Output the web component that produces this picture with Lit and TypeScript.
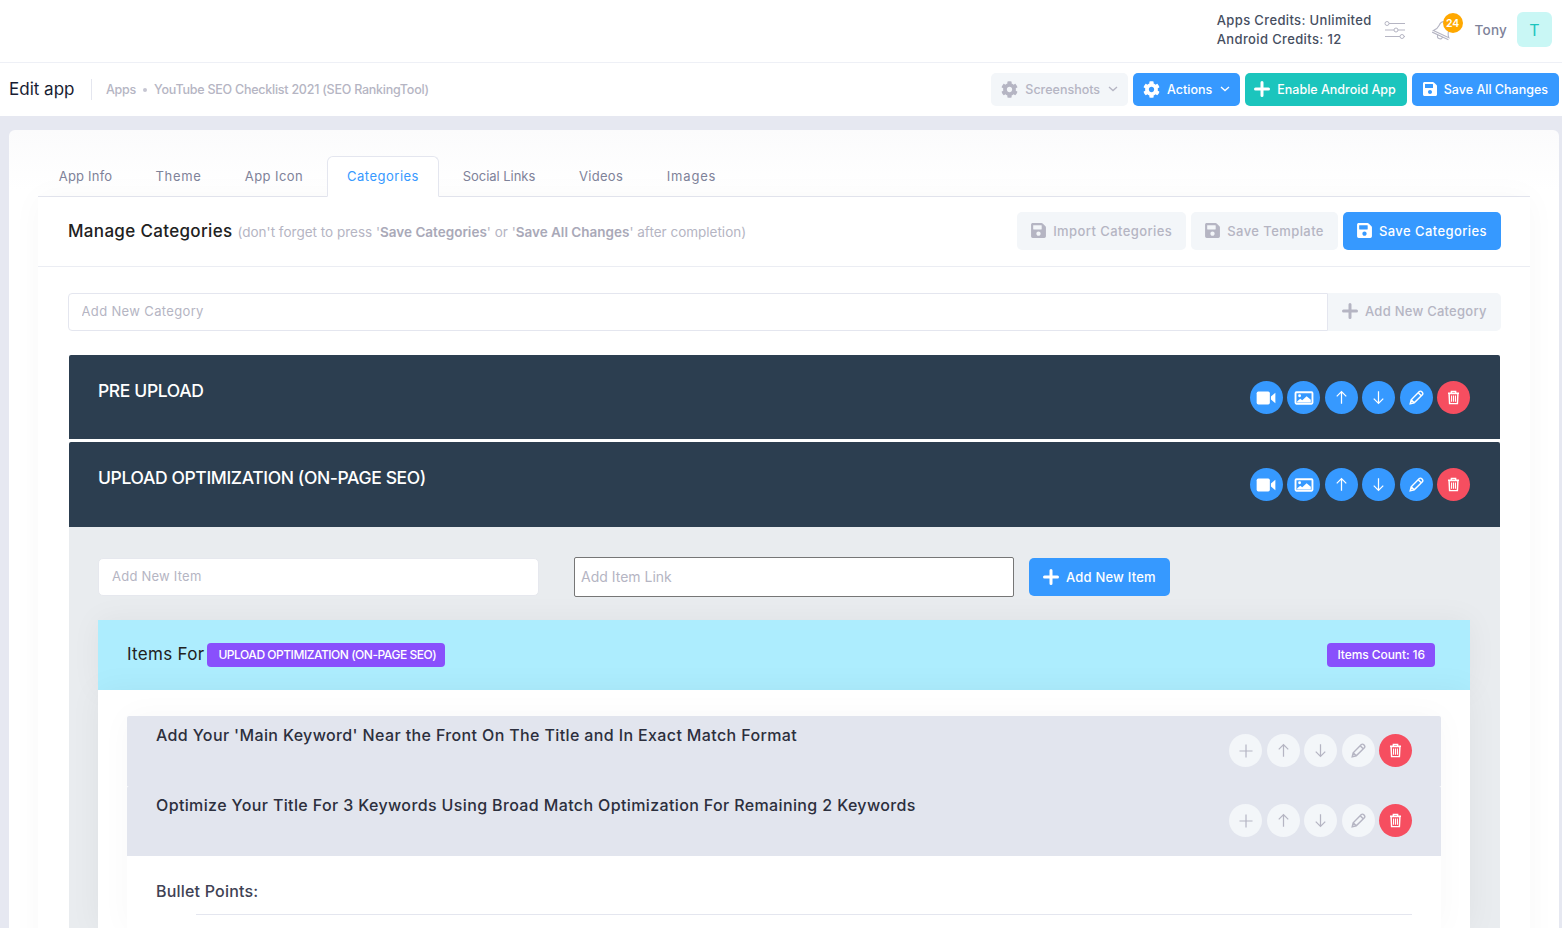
import { LitElement, html, css, svg } from "lit";
import { customElement } from "lit/decorators.js";

const SAVE = "M433.941 129.941l-83.882-83.882A48 48 0 0 0 316.118 32H48C21.49 32 0 53.49 0 80v352c0 26.51 21.49 48 48 48h352c26.51 0 48-21.49 48-48V163.882a48 48 0 0 0-14.059-33.941zM224 416c-35.346 0-64-28.654-64-64 0-35.346 28.654-64 64-64s64 28.654 64 64c0 35.346-28.654 64-64 64zm96-304.52V212c0 6.627-5.373 12-12 12H76c-6.627 0-12-5.373-12-12V108c0-6.627 5.373-12 12-12h228.52c3.183 0 6.235 1.264 8.485 3.515l3.48 3.48A11.996 11.996 0 0 1 320 111.48z";
const COG = "M487.4 315.7l-42.6-24.6c4.3-23.2 4.3-47 0-70.2l42.6-24.6c4.9-2.8 7.1-8.6 5.5-14-11.1-35.6-30-67.8-54.7-94.6-3.8-4.1-10-5.1-14.8-2.3L380.8 110c-17.9-15.4-38.5-27.3-60.8-35.1V25.8c0-5.6-3.9-10.5-9.4-11.7-36.7-8.2-74.3-7.8-109.2 0-5.5 1.2-9.4 6.1-9.4 11.7V75c-22.2 7.9-42.8 19.8-60.8 35.1L88.7 85.5c-4.9-2.8-11-1.9-14.8 2.3-24.7 26.7-43.6 58.9-54.7 94.6-1.7 5.4.6 11.2 5.5 14L67.3 221c-4.3 23.2-4.3 47 0 70.2l-42.6 24.6c-4.9 2.8-7.1 8.6-5.5 14 11.1 35.6 30 67.8 54.7 94.6 3.8 4.1 10 5.1 14.8 2.3l42.6-24.6c17.9 15.4 38.5 27.3 60.8 35.1v49.2c0 5.6 3.9 10.5 9.4 11.7 36.7 8.2 74.3 7.8 109.2 0 5.5-1.2 9.4-6.1 9.4-11.7v-49.2c22.2-7.9 42.8-19.8 60.8-35.1l42.6 24.6c4.9 2.8 11 1.9 14.8-2.3 24.7-26.7 43.6-58.9 54.7-94.6 1.5-5.5-.7-11.3-5.6-14.1zM256 336c-44.1 0-80-35.9-80-80s35.9-80 80-80 80 35.9 80 80-35.9 80-80 80z";

const saveIcon = () => html`<svg class="ico save" viewBox="0 0 448 512"><path d=${SAVE} fill="currentColor"/></svg>`;
const cogIcon = () => html`<svg class="ico cog" viewBox="0 0 512 512"><path d=${COG} fill="currentColor"/></svg>`;
const plusIcon = () => html`<svg class="ico plus" viewBox="0 0 16 16"><path d="M8 1.500v13M1.500 8h13" stroke="currentColor" stroke-width="3" stroke-linecap="round" fill="none"/></svg>`;
const chevron = () => html`<svg class="chev" viewBox="0 0 10 6"><path d="M1 1l4 3.600L9 1" stroke="currentColor" stroke-width="1.300" fill="none"/></svg>`;

const glyphs: Record<string, unknown> = {
  video: svg`<rect x="1.500" y="4.200" width="12" height="11.600" rx="1.500" fill="currentColor"/><path d="M14.500 8.600L18.500 5.200v9.600L14.500 11.400z" fill="currentColor"/>`,
  image: svg`<rect x="2.300" y="4.800" width="15.400" height="10.400" rx="0.800" fill="none" stroke="currentColor" stroke-width="1.700"/><circle cx="6" cy="8" r="1.300" fill="currentColor"/><path d="M3.800 14.200v-1.300l2.800-2.200 1.800 1.300 4-3.600 3.800 3.300v2.500z" fill="currentColor"/>`,
  up: svg`<path d="M10 16.500V4M5 8.800L10 3.800l5 5" fill="none" stroke="currentColor" stroke-width="1.300"/>`,
  down: svg`<path d="M10 3.500V16M5 11.200l5 5 5-5" fill="none" stroke="currentColor" stroke-width="1.300"/>`,
  plus: svg`<path d="M10 3.500v13M3.500 10h13" fill="none" stroke="currentColor" stroke-width="1.200"/>`,
  pencil: svg`<path d="M3.400 16.600l1-4.200 8.600-8.600a1.600 1.600 0 0 1 2.300 0l.9.9a1.600 1.600 0 0 1 0 2.300l-8.600 8.600zM11.800 5l3.200 3.200M4.400 12.400l3.200 3.200" fill="none" stroke="currentColor" stroke-width="1.500"/>`,
  trash: svg`<path d="M3.500 5h13M7.500 5V2.800h5V5M4.800 5.400l.6 11.800h9.200l.6-11.800z" fill="none" stroke="currentColor" stroke-width="1.700"/><path d="M7.700 7.500v7.500M10 7.500v7.500M12.300 7.500v7.500" stroke="currentColor" stroke-width="1.300"/>`,
};

const round = (name: string, kind: string) => html`<span class="rnd ${kind}"><svg viewBox="0 0 20 20" class="g-${name}">${glyphs[name]}</svg></span>`;

@customElement("app-root")
export class AppRoot extends LitElement {
  static styles = css`
    :host { display: block; height: 928px; overflow: hidden; background: #e6e8f1; font-family: Inter, "Open Sans", sans-serif; color: #3f4254; }
    * { box-sizing: border-box; }
    .top { height: 63px; background: #fff; border-bottom: 1px solid #eef0f6; display: flex; align-items: center; justify-content: flex-end; padding-right: 10px; }
    .credits { font-size: 13px; font-weight: 500; line-height: 19px; color: #464e5f; letter-spacing: 0.36px; margin-right: 12px; margin-top: -3px; white-space: nowrap; }
    .sliders { width: 22px; height: 22px; color: #b5b5c3; margin-right: 26px; margin-top: -2px; }
    .bell-wrap { position: relative; width: 22px; height: 26px; margin-right: 21px; margin-top: 4px; }
    .bell { width: 22px; height: 22px; color: #b5b5c3; position: absolute; left: 0; top: -1px; }
    .badge { position: absolute; left: 11px; top: -7px; width: 20px; height: 20px; border-radius: 50%; background: #ffa800; color: #fff; font-size: 10.5px; font-weight: 600; display: flex; align-items: center; justify-content: center; }
    .tony { font-size: 13.500px; font-weight: 500; color: #7e8299; margin-right: 10px; margin-top: -3px; letter-spacing: 0.2px; }
    .avatar { width: 35px; height: 35px; border-radius: 6px; background: #c9f7f5; color: #1bc5bd; font-size: 16px; display: flex; align-items: center; justify-content: center; margin-top: -3px; }

    .sub { height: 53px; background: #fff; display: flex; align-items: center; padding: 0 3px 0 9px; }
    .sub h1 { margin: 0; font-size: 17px; font-weight: 400; color: #181c32; width: 83px; border-right: 1px solid #e4e6ef; line-height: 21px; }
    .crumbs { margin-left: 14px; font-size: 12.500px; font-weight: 500; color: #b5b5c3; display: flex; align-items: center; letter-spacing: -0.24px; flex: 1; }
    .crumbs i { width: 4px; height: 4px; border-radius: 50%; background: #c6c6d2; margin: 0 7px; }
    .btns { display: flex; gap: 5px; }
    .btn { display: inline-flex; align-items: center; border-radius: 5px; font-size: 12.500px; font-weight: 500; color: #fff; white-space: nowrap; padding-bottom: 1px; }
    .sub .btn { height: 33px; padding: 0 11px 1px; }
    .sub .btn.dd { padding: 0 10px 1px 10px; }
    .sub .btn.en { padding-left: 9px; }
    .blue { background: #3699ff; }
    .teal { background: #1bc5bd; }
    .light { background: #f3f6f9; color: #b5b5c3; }
    .ico { flex: none; margin-right: 7px; }
    .ico.save { width: 14px; height: 16px; }
    .ico.cog { width: 17px; height: 17px; }
    .ico.plus { width: 16px; height: 16px; }
    .chev { width: 10px; height: 6px; margin-left: 8px; }

    .wrap { padding: 14px 3px 0 9px; }
    .card { border-radius: 6px 6px 0 0; padding: 26px 29px 0; height: 798px; background: linear-gradient(#fbfbfc, #fff 60px); }
    .tabs { display: flex; gap: 4px; height: 41px; border-bottom: 1px solid #e4e6ef; padding-left: 1px; }
    .tab { height: 41px; font-size: 13px; color: #7e8299; display: flex; align-items: center; justify-content: center; padding-bottom: 1px; border-radius: 6px 6px 0 0; white-space: nowrap; }
    .tab.on { color: #3699ff; background: #fff; border: 1px solid #e4e6ef; border-bottom: 1px solid #fff; }
    .content { background: #fff; box-shadow: 0 0 30px rgba(0, 0, 0, 0.03); height: 760px; }
    .manage { height: 70px; border-bottom: 1px solid #ebedf3; display: flex; align-items: center; padding: 0 29px 2px 30px; justify-content: space-between; }
    .manage h2 { margin: 0; font-size: 17px; font-weight: 500; color: #212121; letter-spacing: 0.33px; display: flex; align-items: baseline; white-space: nowrap; }
    .manage small { font-size: 13.500px; font-weight: 400; color: #b5b5c3; margin-left: 5px; letter-spacing: 0; }
    .manage small b { font-weight: 600; color: #a9a9b8; }
    .manage .btn { height: 38px; padding: 0 14px; font-size: 13px; letter-spacing: 0.42px; }
    .manage .ico.save { width: 15px; height: 17px; }
    .addcat { display: flex; margin: 26px 29px 24px 30px; height: 38px; }
    input { font: inherit; background: #fff; outline: none; }
    input::placeholder { color: #b5b5c3; opacity: 1; }
    .addcat input { flex: 1; min-width: 0; height: 38px; border: 1px solid #e4e6ef; border-radius: 4px 0 0 4px; padding: 0 12.500px 2px; font-size: 13px; letter-spacing: 0.35px; }
    .addcat .btn { height: 38px; width: 173px; padding: 0 14px 2px; border-radius: 0 5px 5px 0; color: #b5b5c3; font-size: 13px; letter-spacing: 0.25px; }
    .cats { margin: 0 30px 0 31px; }
    .cat { height: 84px; background: #2c3e50; border-radius: 2px 2px 0 0; display: flex; justify-content: space-between; padding: 25px 30px 0 29px; margin-bottom: 3px; }
    .cat + .cat { height: 85px; margin-bottom: 0; }
    .cat h3 { margin: 0; font-size: 17.500px; font-weight: 500; color: #fff; line-height: 22px; letter-spacing: -0.37px; }
    .acts { display: flex; gap: 4.500px; }
    .cat .acts { margin-top: 1px; }
    .rnd { width: 33px; height: 33px; border-radius: 50%; display: flex; align-items: center; justify-content: center; }
    .rnd svg { width: 20px; height: 20px; }
    .rnd svg.g-video, .rnd svg.g-image { width: 22px; height: 22px; }
    .rnd svg.g-up, .rnd svg.g-down, .rnd svg.g-pencil { width: 19px; height: 19px; }
    .rnd svg.g-trash { width: 17px; height: 17px; }
    .rnd.b { background: #3699ff; color: #fff; }
    .rnd.r { background: #f64e60; color: #fff; }
    .rnd.l { background: #f3f6f9; color: #b5b5c3; }
    .cat-body { background: #e9ecef; padding: 30px 30px 0 29px; height: 420px; }
    .form { display: flex; align-items: center; height: 40px; }
    .form .item { width: 441px; height: 38px; border: 1px solid #e6e8ee; border-radius: 5px; padding: 0 13px 2px; font-size: 13px; letter-spacing: 0.23px; margin-right: 35px; }
    .form .link { width: 440px; height: 40px; border: 1px solid #767676; border-radius: 2px; padding: 0 6px 2px; font-size: 14px; margin-right: 15px; }
    .form .btn { height: 38px; padding: 0 14px 1px; font-size: 13px; letter-spacing: 0.2px; }
    .band { margin-top: 23px; height: 70px; background: #adedfe; display: flex; align-items: center; padding: 0 35px 0 29px; justify-content: space-between; box-shadow: 0 0 30px rgba(0, 0, 0, 0.05); }
    .band .lh { display: flex; align-items: center; font-size: 17px; color: #212121; }
    .band .lh b { font-weight: 400; letter-spacing: 0.3px; margin-top: -3px; }
    .tag { background: #8950fc; color: #fff; border-radius: 4px; font-size: 12px; font-weight: 500; height: 24px; display: inline-flex; align-items: center; padding: 0 10px 1px; letter-spacing: -0.08px; white-space: nowrap; }
    .band .lh .tag { margin-left: 3px; width: 238px; padding-left: 11px; letter-spacing: -0.47px; }
    .panel { background: #fff; padding: 26px 29px 0; height: 240px; box-shadow: 0 0 30px rgba(0, 0, 0, 0.05); }
    .row { height: 70px; background: #e2e5ee; display: flex; justify-content: space-between; padding: 8px 29px 0 29px; border-radius: 2px 2px 0 0; }
    .row p { margin: 0; font-size: 16px; font-weight: 500; color: #2c2f3d; line-height: 22px; letter-spacing: 0.37px; white-space: nowrap; }
    .row .acts { margin-top: 10px; }
    .rows { box-shadow: 0 0 30px rgba(0, 0, 0, 0.03); height: 214px; }
    .bullets { padding: 24px 29px 0 29px; font-size: 16px; font-weight: 500; color: #3f4254; line-height: 22px; letter-spacing: 0.2px; }
    .bullets hr { border: 0; border-top: 1px solid #e4e6ef; margin: 12px 0 0 40px; }
  `;

  private catActs() {
    return html`<div class="acts">${round("video", "b")}${round("image", "b")}${round("up", "b")}${round("down", "b")}${round("pencil", "b")}${round("trash", "r")}</div>`;
  }
  private rowActs() {
    return html`<div class="acts">${round("plus", "l")}${round("up", "l")}${round("down", "l")}${round("pencil", "l")}${round("trash", "r")}</div>`;
  }

  render() {
    const tabs: [string, number, number][] = [["App Info", 93, 0.2], ["Theme", 85, 0.7], ["App Icon", 98, 0.42], ["Categories", 112, 0.5], ["Social Links", 112, -0.05], ["Videos", 84, 0.3], ["Images", 89, 0.8]];
    return html`
      <div class="top">
        <div class="credits">Apps Credits: Unlimited<br />Android Credits: 12</div>
        <svg class="sliders" viewBox="0 0 22 22" fill="none" stroke="currentColor" stroke-width="1">
          <path d="M5 4.500h16M1 11h9M14 11h7M1 17.500h15M20 17.500h1" />
          <circle cx="3" cy="4.500" r="2" /><circle cx="12" cy="11" r="2" /><circle cx="18" cy="17.500" r="2" />
        </svg>
        <div class="bell-wrap">
          <svg class="bell" viewBox="0 0 22 22" fill="none" stroke="currentColor" stroke-width="1.100">
            <g transform="rotate(25 11 11)">
              <path d="M11 2.500c-3.500 0-5.500 2.500-5.500 6 0 4-1.500 5.500-3 7h17c-1.500-1.500-3-3-3-7 0-3.500-2-6-5.500-6z" />
              <path d="M2 17.500h18M8.500 18a2.500 2.500 0 0 0 5 0" />
            </g>
          </svg>
          <span class="badge">24</span>
        </div>
        <span class="tony">Tony</span>
        <div class="avatar">T</div>
      </div>
      <div class="sub">
        <h1>Edit app</h1>
        <div class="crumbs">Apps<i></i>YouTube SEO Checklist 2021 (SEO RankingTool)</div>
        <div class="btns">
          <span class="btn light dd">${cogIcon()}Screenshots${chevron()}</span>
          <span class="btn blue dd">${cogIcon()}Actions${chevron()}</span>
          <span class="btn teal en">${plusIcon()}Enable Android App</span>
          <span class="btn blue">${saveIcon()}Save All Changes</span>
        </div>
      </div>
      <div class="wrap">
        <div class="card">
          <div class="tabs">${tabs.map(([t, w, ls]) => html`<div class="tab ${t === "Categories" ? "on" : ""}" style="width:${w}px;letter-spacing:${ls}px">${t}</div>`)}</div>
          <div class="content">
            <div class="manage">
              <h2>Manage Categories<small>(don't forget to press '<b>Save Categories</b>' or '<b>Save All Changes</b>' after completion)</small></h2>
              <div class="btns">
                <span class="btn light">${saveIcon()}Import Categories</span>
                <span class="btn light">${saveIcon()}Save Template</span>
                <span class="btn blue">${saveIcon()}Save Categories</span>
              </div>
            </div>
            <div class="addcat">
              <input placeholder="Add New Category" />
              <span class="btn light">${plusIcon()}Add New Category</span>
            </div>
            <div class="cats">
              <div class="cat"><h3>PRE UPLOAD</h3>${this.catActs()}</div>
              <div class="cat"><h3>UPLOAD OPTIMIZATION (ON-PAGE SEO)</h3>${this.catActs()}</div>
              <div class="cat-body">
                <div class="form">
                  <input class="item" placeholder="Add New Item" />
                  <input class="link" placeholder="Add Item Link" />
                  <span class="btn blue">${plusIcon()}Add New Item</span>
                </div>
                <div class="band">
                  <div class="lh"><b>Items For</b><span class="tag">UPLOAD OPTIMIZATION (ON-PAGE SEO)</span></div>
                  <span class="tag">Items Count: 16</span>
                </div>
                <div class="panel">
                  <div class="rows">
                    <div class="row"><p>Add Your 'Main Keyword' Near the Front On The Title and In Exact Match Format</p>${this.rowActs()}</div>
                    <div class="row"><p>Optimize Your Title For 3 Keywords Using Broad Match Optimization For Remaining 2 Keywords</p>${this.rowActs()}</div>
                    <div class="bullets">Bullet Points:<hr /></div>
                  </div>
                </div>
              </div>
            </div>
          </div>
        </div>
      </div>
    `;
  }
}
